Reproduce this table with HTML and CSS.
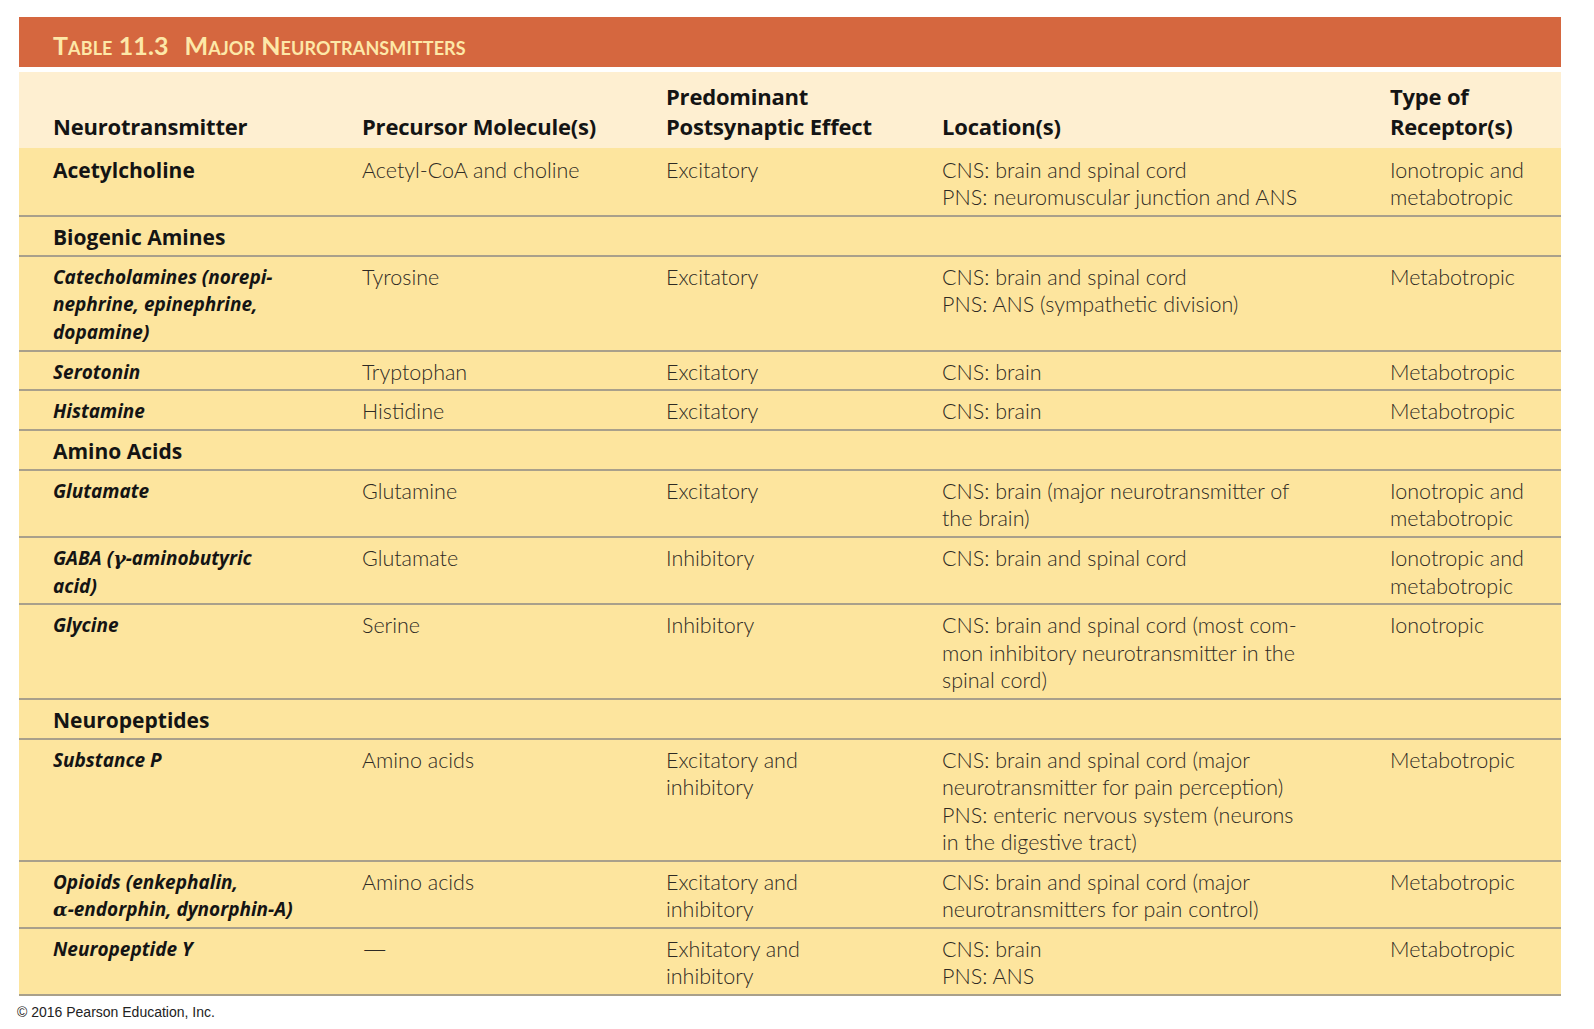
FILE: index.html
```html
<!DOCTYPE html>
<html lang="en">
<head>
<meta charset="utf-8">
<title>Table 11.3 Major Neurotransmitters</title>
<link rel="stylesheet" href="styles.css">
</head>
<body>
<div class="page">
  <div class="title-bar"><span class="title-num">Table 11.3</span><span class="title-text">Major Neurotransmitters</span></div>
  <table class="nt-table">
    <colgroup>
      <col class="c1"><col class="c2"><col class="c3"><col class="c4"><col class="c5">
    </colgroup>
    <thead>
      <tr>
        <th>Neurotransmitter</th>
        <th>Precursor Molecule(s)</th>
        <th>Predominant<br>Postsynaptic Effect</th>
        <th>Location(s)</th>
        <th>Type of<br>Receptor(s)</th>
      </tr>
    </thead>
    <tbody>
      <tr>
        <td class="name-main">Acetylcholine</td>
        <td>Acetyl-CoA and choline</td>
        <td>Excitatory</td>
        <td>CNS: brain and spinal cord<br>PNS: neuromuscular junction and ANS</td>
        <td>Ionotropic and<br>metabotropic</td>
      </tr>
      <tr class="section"><td colspan="5">Biogenic Amines</td></tr>
      <tr>
        <td class="name">Catecholamines (norepi-<br>nephrine, epinephrine,<br>dopamine)</td>
        <td>Tyrosine</td>
        <td>Excitatory</td>
        <td>CNS: brain and spinal cord<br>PNS: ANS (sympathetic division)</td>
        <td>Metabotropic</td>
      </tr>
      <tr>
        <td class="name">Serotonin</td>
        <td>Tryptophan</td>
        <td>Excitatory</td>
        <td>CNS: brain</td>
        <td>Metabotropic</td>
      </tr>
      <tr>
        <td class="name">Histamine</td>
        <td>Histidine</td>
        <td>Excitatory</td>
        <td>CNS: brain</td>
        <td>Metabotropic</td>
      </tr>
      <tr class="section"><td colspan="5">Amino Acids</td></tr>
      <tr>
        <td class="name">Glutamate</td>
        <td>Glutamine</td>
        <td>Excitatory</td>
        <td>CNS: brain (major neurotransmitter of<br>the brain)</td>
        <td>Ionotropic and<br>metabotropic</td>
      </tr>
      <tr>
        <td class="name">GABA (<span class="greek">γ</span>-aminobutyric<br>acid)</td>
        <td>Glutamate</td>
        <td>Inhibitory</td>
        <td>CNS: brain and spinal cord</td>
        <td>Ionotropic and<br>metabotropic</td>
      </tr>
      <tr>
        <td class="name">Glycine</td>
        <td>Serine</td>
        <td>Inhibitory</td>
        <td>CNS: brain and spinal cord (most com-<br>mon inhibitory neurotransmitter in the<br>spinal cord)</td>
        <td>Ionotropic</td>
      </tr>
      <tr class="section"><td colspan="5">Neuropeptides</td></tr>
      <tr>
        <td class="name">Substance P</td>
        <td>Amino acids</td>
        <td>Excitatory and<br>inhibitory</td>
        <td>CNS: brain and spinal cord (major<br>neurotransmitter for pain perception)<br>PNS: enteric nervous system (neurons<br>in the digestive tract)</td>
        <td>Metabotropic</td>
      </tr>
      <tr>
        <td class="name">Opioids (enkephalin,<br><span class="greek">α</span>-endorphin, dynorphin-A)</td>
        <td>Amino acids</td>
        <td>Excitatory and<br>inhibitory</td>
        <td>CNS: brain and spinal cord (major<br>neurotransmitters for pain control)</td>
        <td>Metabotropic</td>
      </tr>
      <tr>
        <td class="name">Neuropeptide Y</td>
        <td><span class="dash">—</span></td>
        <td>Exhitatory and<br>inhibitory</td>
        <td>CNS: brain<br>PNS: ANS</td>
        <td>Metabotropic</td>
      </tr>
    </tbody>
  </table>
  <div class="copyright">© 2016 Pearson Education, Inc.</div>
</div>
</body>
</html>
```

FILE: styles.css
```css
html, body {
  margin: 0;
  padding: 0;
  background: #ffffff;
}

.page {
  padding: 17px 33px 0 19px;
  font-family: "Lato", "Open Sans", sans-serif;
}

.title-bar {
  width: 1542px;
  height: 50px;
  background: #d5673f;
  color: #fde8a8;
  display: flex;
  align-items: center;
  padding: 5px 0 0 34px;
  box-sizing: border-box;
  font-family: "Lato", sans-serif;
  font-weight: 700;
  font-variant: small-caps;
  font-size: 25px;
  letter-spacing: 0.1px;
}

.title-num {
  margin-right: 16px;
}

.nt-table {
  margin-top: 5px;
  width: 1542px;
  border-collapse: collapse;
  table-layout: fixed;
  background: #fde59e;
}

.c1 { width: 343px; }
.c2 { width: 304px; }
.c3 { width: 276px; }
.c4 { width: 448px; }
.c5 { width: 171px; }

.nt-table thead tr {
  background: #feefd1;
}

.nt-table th {
  text-align: left;
  vertical-align: bottom;
  font-family: "Open Sans", sans-serif;
  font-weight: 700;
  font-size: 22px;
  line-height: 30px;
  letter-spacing: -0.2px;
  color: #141414;
  padding: 9px 0 7px 0;
}

.nt-table th:first-child,
.nt-table td:first-child {
  padding-left: 34px;
}

.nt-table td {
  vertical-align: top;
  font-weight: 300;
  font-size: 21.5px;
  line-height: 27.45px;
  color: #2e2a24;
  padding: 7px 0 3.3px 0;
  border-bottom: 2px solid #a9a08b;
}

.nt-table tbody tr:first-child td {
  padding-top: 9px;
}

.nt-table td.name-main,
.nt-table tr.section td {
  font-family: "Open Sans", sans-serif;
  font-weight: 700;
  font-size: 21px;
  color: #141414;
}

.nt-table td.name {
  font-family: "Open Sans", sans-serif;
  font-weight: 700;
  font-style: italic;
  font-size: 19px;
  color: #141414;
}

.greek {
  font-family: "DejaVu Serif", serif;
  font-weight: 700;
}

.dash {
  display: inline-block;
  transform: scaleX(1.5);
  transform-origin: left center;
}

.copyright {
  font-family: "Liberation Sans", Arial, sans-serif;
  font-size: 14px;
  color: #222222;
  padding-top: 8px;
  margin-left: -2px;
}
```
